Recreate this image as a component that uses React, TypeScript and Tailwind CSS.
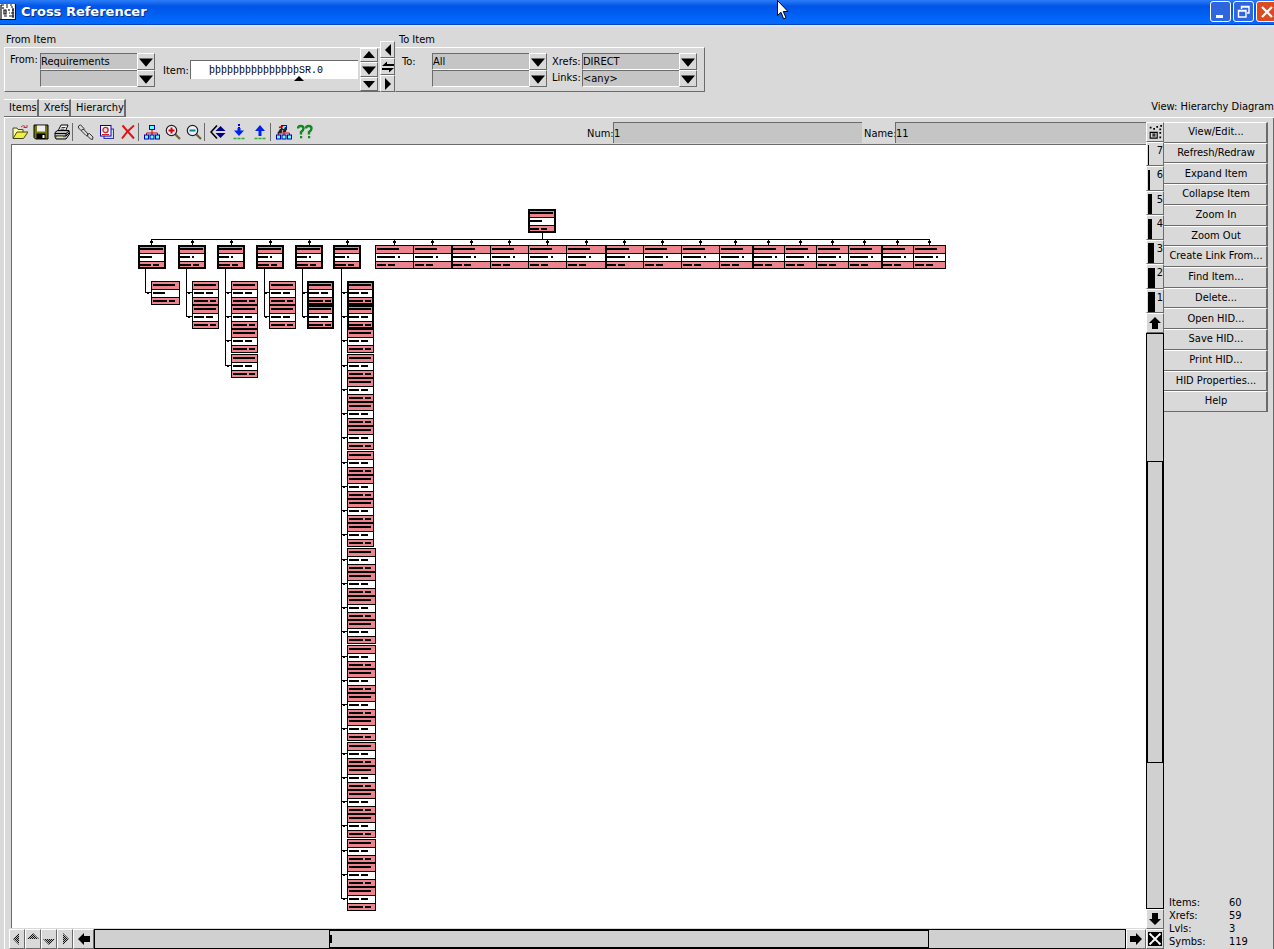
import type { ReactNode } from 'react';

const RAISED =
  'flex items-center justify-center border border-t-white border-l-white border-r-[#6b6b6b] border-b-[#6b6b6b] bg-[#d9d9d9]';

type Dir = 'up' | 'down' | 'left' | 'right';

function Triangle({ dir, small }: { dir: Dir; small?: boolean }) {
  const d = {
    up: 'M0 9 L6 2 L12 9 Z',
    down: 'M0 3 L12 3 L6 10 Z',
    left: 'M3 6 L9 0 L9 12 Z',
    right: 'M9 6 L3 0 L3 12 Z',
  }[dir];
  return (
    <svg viewBox="0 0 12 12" className={small ? 'h-3 w-3' : 'h-3.5 w-3.5'} aria-hidden="true">
      <path d={d} fill="#000" />
    </svg>
  );
}

function BlockArrow({ dir }: { dir: Dir }) {
  const d = {
    up: 'M6 0 L12 6 H9 V12 H3 V6 H0 Z',
    down: 'M6 12 L12 6 H9 V0 H3 V6 H0 Z',
    left: 'M0 6 L6 0 V3 H12 V9 H6 V12 Z',
    right: 'M12 6 L6 0 V3 H0 V9 H6 V12 Z',
  }[dir];
  return (
    <svg viewBox="0 0 12 12" className="h-3 w-3" aria-hidden="true">
      <path d={d} fill="#000" />
    </svg>
  );
}

function HatchArrow({ dir }: { dir: Dir }) {
  const d = {
    up: 'M0 6 L6 0 L12 6 Z',
    down: 'M0 6 L12 6 L6 12 Z',
    left: 'M2 6 L8 0 V12 Z',
    right: 'M10 6 L4 0 V12 Z',
  }[dir];
  return (
    <svg viewBox="0 0 12 12" className="h-3 w-3" aria-hidden="true">
      <defs>
        <pattern id={`hatch-${dir}`} width="2" height="2" patternUnits="userSpaceOnUse">
          <rect width="2" height="2" fill="#b5b5b5" />
          <rect width="1" height="1" fill="#111" />
          <rect x="1" y="1" width="1" height="1" fill="#111" />
        </pattern>
      </defs>
      <path d={d} fill={`url(#hatch-${dir})`} />
    </svg>
  );
}

function Combo({ id, label, value }: { id: string; label: string; value: string }) {
  return (
    <div className="relative h-[17px] w-[115px]">
      <select
        id={id}
        aria-label={label}
        defaultValue={value}
        className="block h-full w-full appearance-none rounded-none border-t border-b border-l border-t-[#6b6b6b] border-b-white border-l-[#6b6b6b] bg-[#c5c5c5] pr-5 text-[11px] leading-[15px] text-black outline-none"
      >
        <option>{value}</option>
      </select>
      <span className={`${RAISED} pointer-events-none absolute top-0 right-0 h-[17px] w-[18px]`}>
        <Triangle dir="down" />
      </span>
    </div>
  );
}

function StepButton({ label, children }: { label: string; children: ReactNode }) {
  return (
    <button type="button" aria-label={label} className={`${RAISED} w-full flex-1 overflow-hidden`}>
      {children}
    </button>
  );
}

function FromSection() {
  return (
    <section className="w-[376px]">
      <h2 className="h-5 pt-[5px] pl-0.5 leading-4">From Item</h2>
      <div className="flex h-[45px] border-t border-b border-l border-t-white border-b-[#6b6b6b] border-l-white pl-[5px]">
        <label htmlFor="from" className="w-[30px] pt-1 leading-4">From:</label>
        <div className="pt-[5px]">
          <Combo id="from" label="From" value="Requirements" />
          <Combo id="from-filter" label="From filter" value="" />
        </div>
        <label htmlFor="item" className="ml-2 w-[27px] pt-[15px] leading-4">Item:</label>
        <div className="relative pt-3">
          <input
            id="item"
            defaultValue="þþþþþþþþþþþþþþþSR.0"
            className="block h-[19px] w-[168px] border-t border-l border-[#6b6b6b] bg-white pl-[18px] font-['Liberation_Mono',monospace] text-[10px] text-black outline-none"
          />
          <svg viewBox="0 0 10 5" className="absolute bottom-2.5 left-[104px] h-[5px] w-2.5" aria-hidden="true">
            <path d="M5 0 L10 5 H0 Z" fill="#000" />
          </svg>
        </div>
        <div className="ml-0.5 flex w-[18px] flex-col">
          <StepButton label="Previous item"><Triangle dir="up" small /></StepButton>
          <StepButton label="Select item"><Triangle dir="down" /></StepButton>
          <StepButton label="Next item"><Triangle dir="down" small /></StepButton>
        </div>
      </div>
    </section>
  );
}

function ToSection() {
  return (
    <section className="w-[310px]">
      <h2 className="h-5 pt-[5px] pl-1 leading-4">To Item</h2>
      <div className="flex h-[45px] border border-t-white border-r-[#6b6b6b] border-b-[#6b6b6b] border-l-transparent pl-1.5">
        <label htmlFor="to" className="w-[30px] pt-1.5 leading-4">To:</label>
        <div className="pt-[5px]">
          <Combo id="to" label="To" value="All" />
          <Combo id="to-filter" label="To filter" value="" />
        </div>
        <div className="ml-[5px] flex w-[30px] flex-col pt-1.5 leading-4">
          <label htmlFor="xrefs">Xrefs:</label>
          <label htmlFor="links">Links:</label>
        </div>
        <div className="pt-[5px]">
          <Combo id="xrefs" label="Xrefs" value="DIRECT" />
          <Combo id="links" label="Links" value="<any>" />
        </div>
      </div>
    </section>
  );
}

const OrgChart = (
  <>
    <path d="M8 6 V9 M2.5 11 V9 H13.5 V11 M8 9 V11" stroke="#c00" fill="none" />
    <rect x="5.5" y="1.5" width="5" height="4" fill="#6ff" stroke="#00f" />
    <rect x="0.5" y="11" width="4" height="4" fill="#6ff" stroke="#00a" />
    <rect x="6" y="11" width="4" height="4" fill="#6ff" stroke="#00a" />
    <rect x="11.5" y="11" width="4" height="4" fill="#6ff" stroke="#00a" />
  </>
);

const TOOLS: { name: string; icon: ReactNode }[][] = [
  [
    {
      name: 'Open',
      icon: (
        <>
          <path d="M1 14 V4 H5 L6 5.5 H11 V8" fill="#ff9" stroke="#444" />
          <path d="M1 14.5 L5 8 H16 L11.5 14.5 Z" fill="#ee4" stroke="#441" />
          <path d="M9 3 Q12 0 14 4 M11.5 3.5 H15 V1" stroke="#d22" fill="none" />
        </>
      ),
    },
    {
      name: 'Save',
      icon: (
        <>
          <path d="M1 1 H15 V15 H2.5 L1 13.5 Z" fill="#771" stroke="#000" />
          <rect x="4" y="1.5" width="8" height="6" fill="#eee" />
          <rect x="3.5" y="9.5" width="9" height="5.5" fill="#000" />
          <rect x="9.5" y="11" width="2" height="3" fill="#fff" />
        </>
      ),
    },
    {
      name: 'Print',
      icon: (
        <>
          <path d="M4 7 L7 1 H14 L11.5 7 Z" fill="#fff" stroke="#000" />
          <path d="M7.5 3.5 H11.5 M6.5 5.2 H10.5" stroke="#000" strokeWidth=".8" />
          <path d="M1 8.5 L3.5 6.5 H15 L15.5 10 L12 15 H2 L1 13 Z" fill="#bbb" stroke="#000" />
          <path d="M1 9.5 H12 L15 7 M1.5 12 H12 V9.5 M12 12 L15 9" stroke="#000" fill="none" />
          <rect x="3" y="12.6" width="6" height="1.4" fill="#ee5" />
        </>
      ),
    },
  ],
  [
    {
      name: 'Link',
      icon: (
        <g fill="none" stroke="#333" strokeWidth="1">
          <path d="M0.5 2 L2.5 0.8 L6 4.5 L5 6 M0.5 2 V4 L3 6.5" />
          <path d="M3 6.5 L5.5 5 L10 10 L9.5 12 L8 11.5 L4.5 8 Z" />
          <path d="M9 10.5 L11.5 9.5 L15 13 L14.5 15.5 L12.5 15 L9.5 12" />
        </g>
      ),
    },
    {
      name: 'Duplicate',
      icon: (
        <>
          <rect x="5" y="5" width="9.5" height="9.5" fill="#cde" stroke="#33a" />
          <rect x="1.5" y="1.5" width="10.5" height="10.5" fill="#fff" stroke="#00c" />
          <circle cx="6.5" cy="6" r="2.6" fill="#fdd" stroke="#c22" strokeWidth="1.3" />
          <path d="M3 10.5 H10" stroke="#c22" />
        </>
      ),
    },
    {
      name: 'Delete',
      icon: <path d="M2.5 1.5 L14 14.5 M14 1.5 Q7 7 2 14.5" stroke="#e01515" strokeWidth="2" fill="none" />,
    },
  ],
  [
    { name: 'Hierarchy', icon: OrgChart },
    {
      name: 'Zoom in',
      icon: (
        <>
          <path d="M10 10 L15 15" stroke="#663" strokeWidth="2.2" />
          <circle cx="6.5" cy="6.5" r="5.2" fill="#eef" stroke="#222" strokeWidth="1.2" />
          <path d="M6.5 3.5 V9.5 M3.5 6.5 H9.5" stroke="#d00" strokeWidth="2" />
        </>
      ),
    },
    {
      name: 'Zoom out',
      icon: (
        <>
          <path d="M10 10 L15 15" stroke="#663" strokeWidth="2.2" />
          <circle cx="6.5" cy="6.5" r="5.2" fill="#eef" stroke="#222" strokeWidth="1.2" />
          <path d="M3.5 6.5 H9.5" stroke="#088" strokeWidth="2" />
        </>
      ),
    },
  ],
  [
    {
      name: 'Center',
      icon: (
        <>
          <path d="M7 1.5 L1 8 L7 14.5" stroke="#000" fill="none" strokeWidth="1.6" />
          <path d="M10.5 2 L15.5 7 H5.5 Z M10.5 14 L15.5 9 H5.5 Z" fill="#008" />
        </>
      ),
    },
    {
      name: 'Expand',
      icon: (
        <>
          <path d="M8 0 V4" stroke="#00c" strokeWidth="2" strokeDasharray="2 1" />
          <path d="M6.5 4 H9.5 V6.5 H13 L8 12 L3 6.5 H6.5 Z" fill="#02e" />
          <path d="M2.5 14.5 H14" stroke="#3a3" strokeWidth="1.5" strokeDasharray="3 1" />
        </>
      ),
    },
    {
      name: 'Collapse',
      icon: (
        <>
          <path d="M6.5 12 H9.5 V7 H13 L8 1 L3 7 H6.5 Z" fill="#02e" />
          <path d="M2.5 14.5 H14" stroke="#3a3" strokeWidth="1.5" strokeDasharray="3 1" />
        </>
      ),
    },
  ],
  [
    {
      name: 'Find',
      icon: (
        <>
          {OrgChart}
          <path d="M1 9.5 L4 5 L7 4 L5.5 9 Z M6.5 8 L9 3 H11 L10 8 Z" fill="#222" />
          <path d="M3 3.5 L7 2.5" stroke="#c00" strokeWidth="1.3" />
        </>
      ),
    },
    {
      name: 'Help',
      icon: (
        <>
          <g fill="none" stroke="#118822" strokeWidth="2.4">
            <path d="M1 4.5 Q1 2 3.8 2 Q6.5 2 6.5 4.5 Q6.5 6.5 4 8 V10.5" />
            <path d="M9 4.5 Q9 2 11.8 2 Q14.5 2 14.5 4.5 Q14.5 6.5 12 8 V10.5" />
          </g>
          <path d="M3 12 H5.2 V14.2 H3 Z M11 12 H13.2 V14.2 H11 Z" fill="#118822" />
        </>
      ),
    },
  ],
];

function Toolbar() {
  return (
    <div className="flex h-[26px] items-center pt-1 pb-px">
      <div className="flex flex-1 items-center pb-px">
        {TOOLS.map((group, g) => (
          <div key={g} className="flex items-center">
            {g > 0 && <span className="mr-0.5 h-[18px] w-px bg-[#6b6b6b]" />}
            {group.map((tool) => (
              <button
                key={tool.name}
                type="button"
                aria-label={tool.name}
                className="flex h-5 w-[21px] items-center justify-center"
              >
                <svg viewBox="0 0 16 16" className="h-4 w-4" aria-hidden="true">{tool.icon}</svg>
              </button>
            ))}
          </div>
        ))}
      </div>
      <label htmlFor="num" className="w-[26px] pt-1">Num:</label>
      <input
        id="num"
        defaultValue="1"
        className="h-[21px] w-[249px] border-t border-l border-[#6b6b6b] bg-[#c5c5c5] pt-px text-[11px] text-black outline-none"
      />
      <label htmlFor="name" className="w-[33px] pt-1 pl-0.5">Name:</label>
      <input
        id="name"
        defaultValue="11"
        className="h-[21px] w-[251px] border-t border-l border-[#6b6b6b] bg-[#c5c5c5] pt-px text-[11px] text-black outline-none"
      />
    </div>
  );
}

const PINK = '#ec848e';

type NodeProps = { x: number; y: number; w: number; thick?: boolean; mid: number[]; foot: number[]; head: number };

function Node({ x, y, w, thick, mid, foot, head }: NodeProps) {
  const t = thick ? 2 : 1;
  return (
    <g shapeRendering="crispEdges">
      <rect x={x} y={y} width={w} height={24} fill="#000" />
      <rect x={x + t} y={y + t} width={w - 2 * t} height={8 - t} fill={PINK} />
      <rect x={x + t} y={y + 9} width={w - 2 * t} height={7} fill="#fff" />
      <rect x={x + t} y={y + 17} width={w - 2 * t} height={7 - t} fill={PINK} />
      <rect x={x + 2} y={y + 3} width={head} height={2} fill="#000" />
      <rect x={x + 2} y={y + 11} width={mid[0]} height={2} fill="#000" />
      {mid.length > 1 && <rect x={x + 2 + mid[0] + mid[1]} y={y + 11} width={mid[2]} height={2} fill="#000" />}
      <rect x={x + 2} y={y + 19} width={foot[0]} height={2} fill="#000" />
      <rect x={x + 2 + foot[0] + foot[1]} y={y + 19} width={foot[2]} height={2} fill="#000" />
    </g>
  );
}

type Branch = { x: number; drop: number; trunk: number; childX: number; count: number; thick: number };

const BRANCHES: Branch[] = [
  { x: 138, drop: 151, trunk: 145, childX: 151, count: 1, thick: 0 },
  { x: 178, drop: 192, trunk: 186, childX: 192, count: 2, thick: 0 },
  { x: 217, drop: 231, trunk: 225, childX: 231, count: 4, thick: 0 },
  { x: 256, drop: 270, trunk: 264, childX: 269, count: 2, thick: 0 },
  { x: 295, drop: 309, trunk: 302, childX: 307, count: 2, thick: 2 },
  { x: 333, drop: 347, trunk: 341, childX: 347, count: 26, thick: 2 },
];

const LEAF_EDGES = [375, 413, 451, 490, 528, 566, 605, 643, 681, 719, 752, 784, 816, 848, 881, 913, 945];
const LEAF_DROPS = [394, 432, 471, 509, 547, 586, 624, 662, 700, 735, 768, 800, 832, 864, 897, 929];
const HEAVY_EDGES = [451, 605, 752, 881];

function Drop({ x }: { x: number }) {
  return (
    <g shapeRendering="crispEdges">
      <rect x={x} y={239} width={1} height={6} />
      <rect x={x - 1} y={241} width={3} height={2} />
    </g>
  );
}

function Diagram() {
  return (
    <svg viewBox="12 145 940 780" width="940" height="780" className="block shrink-0" role="img" aria-label="Hierarchy diagram">
      <g shapeRendering="crispEdges">
        <rect x={151} y={239} width={779} height={1} />
        <rect x={542} y={233} width={1} height={6} />
      </g>
      <Node x={528} y={209} w={28} thick head={23} mid={[12]} foot={[9, 2, 6]} />
      {BRANCHES.map((b, i) => {
        const tops = Array.from({ length: b.count }, (_, n) => 281 + Math.round(n * 24.24));
        return (
          <g key={b.x}>
            <Drop x={b.drop} />
            <Node x={b.x} y={245} w={28} thick head={23} mid={i === 0 ? [12] : [10, 2, 2]} foot={[11, 2, 6]} />
            <rect x={b.trunk} y={269} width={1} height={tops[b.count - 1] + 12 - 269} shapeRendering="crispEdges" />
            {tops.map((y, n) => (
              <g key={y}>
                <rect x={b.trunk} y={y + 11} width={b.childX - b.trunk} height={1} shapeRendering="crispEdges" />
                <rect x={b.childX - 4} y={y + 11} width={2} height={2} shapeRendering="crispEdges" />
                <Node
                  x={b.childX}
                  y={y}
                  w={i === 0 || n > 10 ? 29 : 27}
                  thick={n < b.thick}
                  head={22}
                  mid={i === 0 ? [12] : [10, 2, 7]}
                  foot={[14, 2, 6]}
                />
              </g>
            ))}
          </g>
        );
      })}
      {LEAF_DROPS.map((d, i) => (
        <g key={d}>
          <Drop x={d} />
          <Node x={LEAF_EDGES[i]} y={245} w={LEAF_EDGES[i + 1] - LEAF_EDGES[i] + 1} head={22} mid={[18, 3, 2]} foot={[9, 2, 7]} />
        </g>
      ))}
      {HEAVY_EDGES.map((x) => (
        <rect key={x} x={x} y={245} width={2} height={24} shapeRendering="crispEdges" />
      ))}
    </svg>
  );
}

function LevelColumn() {
  const bars = ['w-px', 'w-0.5', 'w-1', 'w-1', 'w-1.5', 'w-[7px]', 'w-[7px]'];
  return (
    <div className="flex w-[18px] flex-col pt-1">
      <button type="button" aria-label="Overview" className={`${RAISED} h-5`}>
        <svg viewBox="0 0 16 16" className="h-3.5 w-3.5" aria-hidden="true">
          <path d="M2.5 8.5 H10.5 V15 H2.5 Z M5 12.5 H8.5 M5 10.5 H8.5" fill="none" stroke="#000" strokeWidth="1.3" />
          <path d="M2 2 H4 V4 H2 Z M6 3.5 H8 V5.5 H6 Z M9.5 1 H11.5 V3 H9.5 Z M13 4 H15 V6 H13 Z M13 8 H15 V10 H13 Z M13 13 H15 V15 H13 Z M14 0 H16 V2 H14 Z" />
        </svg>
      </button>
      <div className="grid h-[171px] auto-rows-fr">
        {bars.map((bar, i) => (
          <button
            key={i}
            type="button"
            className="flex items-end justify-between border border-t-white border-r-[#6b6b6b] border-b-[#6b6b6b] border-l-white bg-[#d9d9d9] text-[11px]"
          >
            <span className={`${bar} ml-px h-5 bg-black`} />
            <span className="self-start leading-4">{7 - i}</span>
          </button>
        ))}
      </div>
      <button type="button" aria-label="Scroll up" className={`${RAISED} h-5`}><BlockArrow dir="up" /></button>
      <div className="flex flex-1 flex-col border border-black bg-[#d0d0d0]">
        <div className="flex-[127]" />
        <div className="flex-[300] border-y border-black shadow-[inset_1px_0_0_#000,inset_-1px_0_0_#000]" />
        <div className="flex-[145]" />
      </div>
      <button type="button" aria-label="Scroll down" className={`${RAISED} h-5`}><BlockArrow dir="down" /></button>
      <button type="button" aria-label="Fit diagram" className={`${RAISED} h-5`}>
        <svg viewBox="0 0 14 14" className="h-3.5 w-3.5" aria-hidden="true">
          <rect width="14" height="14" />
          <path d="M1.5 1.5 L12.5 12.5 M12.5 1.5 L1.5 12.5" stroke="#fff" strokeWidth="1.8" />
          <path d="M7 0 L9.5 3.5 H4.5 Z M7 14 L9.5 10.5 H4.5 Z M0 7 L3.5 4.5 V9.5 Z M14 7 L10.5 4.5 V9.5 Z" />
        </svg>
      </button>
    </div>
  );
}

const ACTIONS = [
  'View/Edit...', 'Refresh/Redraw', 'Expand Item', 'Collapse Item', 'Zoom In', 'Zoom Out', 'Create Link From...',
  'Find Item...', 'Delete...', 'Open HID...', 'Save HID...', 'Print HID...', 'HID Properties...', 'Help',
];

const STATS = [['Items:', '60'], ['Xrefs:', '59'], ['Lvls:', '3'], ['Symbs:', '119']];

function ActionColumn() {
  return (
    <aside className="flex w-[110px] flex-col justify-between border-r border-[#6b6b6b] pt-1 pr-[5px]">
      <div className="grid h-[290px] auto-rows-fr">
        {ACTIONS.map((a) => (
          <button
            key={a}
            type="button"
            className="border-t border-r-2 border-b border-t-white border-r-[#6b6b6b] border-b-[#6b6b6b] bg-[#d9d9d9] pl-0.5 whitespace-nowrap"
          >
            {a}
          </button>
        ))}
      </div>
      <dl className="grid grid-cols-[60px_1fr] pb-px pl-[5px] leading-[13px]">
        {STATS.map(([k, v]) => (
          <div key={k} className="contents">
            <dt>{k}</dt>
            <dd>{v}</dd>
          </div>
        ))}
      </dl>
    </aside>
  );
}

function TitleBar() {
  const box = 'flex h-[21px] w-[21px] items-center justify-center rounded-[3px] border border-white';
  return (
    <header className="relative flex h-[25px] items-center overflow-hidden bg-linear-to-b from-[#2a7cf8] from-0% via-[#0054e6] via-25% to-[#0269ff] to-85% pb-0.5 shadow-[inset_0_-1px_0_#0344b8]">
      <svg viewBox="0 0 16 16" className="h-4 w-4" aria-hidden="true">
        <rect width="16" height="16" fill="#fff" />
        <path d="M0 15.5 H15.5 V0 M1 1 V15 M1 1 H4 M6 1 H8 M10 1 H12 M3 3 V5 M6 3 H8 M11 3 H13 M4 6 H6 V10 H4 Z M4 12 H7 M9 5 V7 M9 9 H10 M12 6 H14 M11 9 H14 M9 12 H14 M13 4 V14" fill="none" stroke="#111" strokeWidth="1.2" />
      </svg>
      <h1 className="flex-1 pl-[5px] font-['DejaVu_Sans',sans-serif] text-[13px] font-bold text-white [text-shadow:1px_1px_0_#0a2d80]">
        Cross Referencer
      </h1>
      <div className="-mr-[9px] flex gap-0.5">
        <button type="button" aria-label="Minimize" className={`${box} bg-[#2f66dd]`}>
          <svg viewBox="0 0 16 16" className="h-4 w-4" aria-hidden="true"><path d="M3 11 H10 V14 H3 Z" fill="#fff" /></svg>
        </button>
        <button type="button" aria-label="Restore" className={`${box} bg-[#2f66dd]`}>
          <svg viewBox="0 0 16 16" className="h-4 w-4" aria-hidden="true">
            <path d="M5.5 5 V2.5 H13 V9 H11 M5 3 H13.5 M2.5 6.5 H10 V13 H2.5 Z M2 7 H10.5" fill="none" stroke="#fff" strokeWidth="1.4" />
          </svg>
        </button>
        <button type="button" aria-label="Close" className={`${box} mr-1.5 bg-[#dd4a22]`}>
          <svg viewBox="0 0 16 16" className="h-4 w-4" aria-hidden="true"><path d="M3 3 L13 13 M13 3 L3 13" stroke="#fff" strokeWidth="2.2" /></svg>
        </button>
      </div>
      <svg viewBox="0 0 12 20" className="absolute top-0 left-[61%] h-5 w-3" aria-hidden="true">
        <path d="M0.5 0.5 V15.5 L4 12.3 L6.6 18.8 L9 17.8 L6.3 11.5 H11 Z" fill="#fff" stroke="#000" />
      </svg>
    </header>
  );
}

export default function App() {
  return (
    <div className="flex min-h-screen w-full flex-col overflow-hidden bg-[#d9d9d9] font-['DejaVu_Sans_Condensed','Noto_Sans',sans-serif] text-[11px] text-black">
      <TitleBar />
      <div className="flex border-t-2 border-[#dfe3fa] pl-1">
        <FromSection />
        <div className="mt-3.5 flex w-[15px] flex-col">
          <StepButton label="Copy to left"><Triangle dir="left" small /></StepButton>
          <StepButton label="Swap">
            <svg viewBox="0 0 12 12" className="h-3 w-3" aria-hidden="true">
              <path d="M0 5 L5 0.5 V3 H12 V5 Z M12 7 L7 11.5 V9 H0 V7 Z" />
            </svg>
          </StepButton>
          <StepButton label="Copy to right"><Triangle dir="right" small /></StepButton>
        </div>
        <ToSection />
      </div>
      <div className="flex items-end justify-between pt-[7px] pl-1">
        <div role="tablist" className="flex">
          {['Items', 'Xrefs', 'Hierarchy'].map((t, i) => (
            <button
              key={t}
              type="button"
              role="tab"
              aria-selected={i === 2}
              className="h-[18px] border-t border-r-2 border-b border-t-white border-r-[#6b6b6b] border-b-[#6b6b6b] pl-[5px]"
            >
              {t}
            </button>
          ))}
        </div>
        <p className="pb-0.5 leading-4">View: Hierarchy Diagram</p>
      </div>
      <div className="ml-1 flex flex-1 border-t border-l border-white">
        <main className="flex min-w-0 flex-1 flex-col pl-1">
          <Toolbar />
          <div className="ml-0.5 flex-1 overflow-hidden border-t border-l border-[#6b6b6b] bg-white">
            <Diagram />
          </div>
          <div className="flex h-[21px] pt-px">
            {(['left', 'up', 'down', 'right'] as Dir[]).map((d) => (
              <button key={d} type="button" aria-label={`Move ${d}`} className={`${RAISED} w-4`}>
                <HatchArrow dir={d} />
              </button>
            ))}
            <button type="button" aria-label="Scroll left" className={`${RAISED} w-[21px]`}><BlockArrow dir="left" /></button>
            <div className="flex flex-1 border border-black bg-[#d0d0d0]">
              <div className="flex-[235]" />
              <div className="flex flex-[599] items-center border-x border-black shadow-[inset_0_1px_0_#000,inset_0_-1px_0_#000]">
                <span className="h-2 w-0.5 bg-black" />
              </div>
              <div className="flex-[197]" />
            </div>
            <button type="button" aria-label="Scroll right" className={`${RAISED} w-5`}><BlockArrow dir="right" /></button>
          </div>
        </main>
        <LevelColumn />
        <ActionColumn />
      </div>
    </div>
  );
}
